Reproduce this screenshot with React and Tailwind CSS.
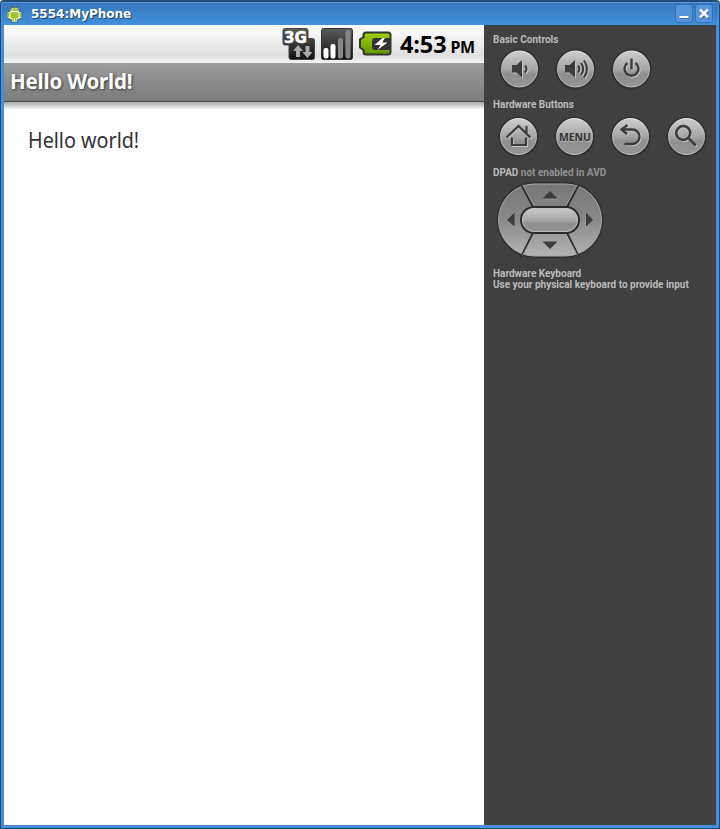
import React from "react";

function AndroidIcon() {
  return (
    <svg width="16" height="18" viewBox="0 0 16 18" className="shrink-0">
      <path d="M3.500 .5l2 3M11.500 .5l-2 3" stroke="#4d5f30" strokeWidth="1" />
      <path d="M3 6.500V5l2-2.500h5L12 5v1.500l2.800.5v6l-2.300.5-.5 1h-1.500V17h-6v-2.500H3l-.5-1L.2 13V7z" fill="#fff" stroke="#45572e" strokeWidth=".7" />
      <g fill="#9dc526">
        <rect x="1" y="7.500" width="1.500" height="4.500" />
        <rect x="12.500" y="7.500" width="1.500" height="4.500" />
        <path d="M3.800 6a3.700 3 0 0 1 7.400 0zM3.500 7.200h8v6h-2V16H8v-2.800H7V16H5.500v-2.800h-2z" />
      </g>
      <path d="M5.500 4.300h1v1h-1zM8.500 4.300h1v1h-1z" fill="#fff" />
    </svg>
  );
}

function WindowButton({ children }) {
  return (
    <div className="flex h-[19px] w-[18px] items-center justify-center rounded-[3px] border border-[#3370b5] bg-[#5795da]">
      <svg width="16" height="17" viewBox="0 0 16 17" fill="none">{children}</svg>
    </div>
  );
}

function NetworkIcon() {
  return (
    <svg width="34" height="34" viewBox="0 0 34 34">
      <defs>
        <linearGradient id="dark" x1="0" y1="0" x2="0" y2="1">
          <stop offset="0" stopColor="#5c5c5c" /><stop offset="1" stopColor="#111" />
        </linearGradient>
      </defs>
      <path d="M3 1.500h21q2 0 2 2v8h4.500q2 0 2 2v17q0 2-2 2H9q-2 0-2-2V18H3q-2 0-2-2V3.500q0-2 2-2z" fill="url(#dark)" stroke="#444" />
      <text x="2" y="16" fill="#fff" stroke="#fff" strokeWidth=".5" fontFamily="DejaVu Sans, sans-serif" fontSize="16.5" fontWeight="700" textLength="23" lengthAdjust="spacingAndGlyphs">3G</text>
      <path d="M16 18l5 6h-3v6h-4v-6h-3zM25.500 31l5-6h-3v-6h-4v6h-3z" fill="#aaa" />
    </svg>
  );
}

function SignalIcon() {
  return (
    <svg width="34" height="34" viewBox="0 0 34 34">
      <rect x="1.500" y="1.500" width="31" height="31" rx="2" fill="url(#dark)" stroke="#333" />
      <rect x="3.500" y="21" width="5" height="10.500" rx="2" fill="#fff" />
      <rect x="10.500" y="17" width="5" height="14.500" rx="2" fill="#fff" />
      <rect x="18" y="11" width="5" height="20.500" rx="2" fill="#888" />
      <rect x="25.500" y="3" width="5" height="28.500" rx="2" fill="#858585" />
    </svg>
  );
}

function BatteryIcon() {
  return (
    <svg width="34" height="26" viewBox="0 0 34 26">
      <defs>
        <linearGradient id="green" x1="0" y1="0" x2="0" y2="1">
          <stop offset="0" stopColor="#a0d000" /><stop offset="1" stopColor="#609500" />
        </linearGradient>
      </defs>
      <path d="M8 1.500h22q2.500 0 2.500 2.500v17q0 2.500-2.500 2.500H8q-2.500 0-2.500-2.500v-2L2 16.500v-8L5.500 6V4q0-2.500 2.500-2.500z" fill="url(#green)" stroke="#333" strokeWidth="2" />
      <path d="M32 7H17q-3 0-3 3v6q0 3 3 3h15z" fill="#333" />
      <path d="M24.500 7L16.500 14h6l-3 5 10-7.500H24l3-4.500z" fill="#fff" />
    </svg>
  );
}

function Etched({ d, width = 2.500, fill = false }) {
  return (
    <>
      <path d={d} transform="translate(1 1)" fill={fill ? "#c4c4c4" : "none"} stroke="#c4c4c4" strokeWidth={fill ? 0 : width} />
      <path d={d} fill={fill ? "#3c3c3c" : "none"} stroke="#3c3c3c" strokeWidth={fill ? 0 : width} />
    </>
  );
}

function RoundButton({ label, children, low = false }) {
  return (
    <svg width="40" height="40" viewBox={low ? "0 -0.5 40 40" : "0 0 40 40"} className="overflow-visible" role="img" aria-label={label}>
      <defs>
        <linearGradient id="knob" x1="0" y1="0" x2="0" y2="1">
          <stop offset="0" stopColor="#cecece" /><stop offset=".5" stopColor="#a6a6a6" />
          <stop offset=".65" stopColor="#8e8e8e" /><stop offset="1" stopColor="#969696" />
        </linearGradient>
        <linearGradient id="rim" x1="0" y1="0" x2="0" y2="1">
          <stop offset="0" stopColor="#e4e4e4" /><stop offset=".5" stopColor="#b4b4b4" /><stop offset="1" stopColor="#c0c0c0" />
        </linearGradient>
      </defs>
      <circle cx="20.500" cy="20.200" r="20.500" fill="#393939" />
      <circle cx="20.500" cy="20.200" r="19.600" fill="#2e2e2e" />
      <circle cx="20.500" cy="20" r="18" fill="url(#knob)" stroke="url(#rim)" />
      {children}
    </svg>
  );
}

function PanelLabel({ children, className = "" }) {
  return <div className={"h-[11px] whitespace-nowrap text-[10px] leading-[11px] font-bold text-[#bcbcbc] " + className}>{children}</div>;
}

function DPad() {
  return (
    <svg width="108" height="78" viewBox="0 0 108 78" className="mt-[3px] ml-[3px] block">
      <defs>
        <linearGradient id="pad" x1="0" y1="0" x2="0" y2="1">
          <stop offset="0" stopColor="#777" /><stop offset=".5" stopColor="#898989" /><stop offset="1" stopColor="#b5b5b5" />
        </linearGradient>
      </defs>
      <rect x=".5" y="1" width="107" height="76" rx="38" fill="#2f2f2f" />
      <rect x="2.500" y="3" width="103" height="72" rx="36" fill="url(#pad)" stroke="#a8a8a8" />
      <path d="M25 3l12.500 24M83 3L70.500 27M25 76l12.500-25M83 76L70.500 51" stroke="#2c2c2c" strokeWidth="2" />
      <path d="M26.500 3.500l12.500 23M81.500 3.500l-12.500 23M26.500 74.500l12.500-23M81.500 74.500l-12.500-23" stroke="#aaa" strokeWidth=".7" />
      <rect x="25" y="26" width="58" height="26" rx="13" fill="url(#knob)" stroke="#2b2b2b" strokeWidth="2" />
      <rect x="26.500" y="27.500" width="55" height="23" rx="11.500" fill="none" stroke="#c0c0c0" strokeWidth=".8" />
      <path d="M47 18h15M47 61h15M90 46V33" stroke="#b2b2b2" strokeWidth=".7" />
      <path d="M46.500 17.500L54 10l7.500 7.500zM46.500 60.500L54 68l7.500-7.500zM18.500 31.500v14L11 39zM90 31.500v14l7-6.500z" fill="#3c3c3c" />
    </svg>
  );
}

export default function App() {
  return (
    <div className="flex h-[829px] w-[720px] flex-col overflow-hidden rounded-t-[4px] border border-t-[2px] border-[#204a75] bg-[#4590db] px-[3px] pb-[3px] font-['Roboto',sans-serif]">
      <header className="-mx-[2px] flex h-[23px] shrink-0 items-center bg-linear-to-b from-[#3775bb] to-[#428fdb] pl-[5px] pr-[4px] shadow-[inset_0_1px_#5599df]">
        <AndroidIcon />
        <h1 className="ml-[8px] flex-1 font-['DejaVu_Sans',sans-serif] text-[12px] leading-[18px] font-bold text-white [text-shadow:1px_1px_1px_#183f6b]">5554:MyPhone</h1>
        <div className="mr-[1px] flex gap-[2px]">
          <WindowButton><path d="M4 12.500h9" stroke="#24578d" strokeWidth="2" /><path d="M3.500 12h9" stroke="#fff" strokeWidth="2" /></WindowButton>
          <WindowButton><path d="M4.500 5.500l8 8m0-8l-8 8" stroke="#24578d" strokeWidth="2.500" /><path d="M4 4.500l8 8m0-8l-8 8" stroke="#fff" strokeWidth="2.500" /></WindowButton>
        </div>
      </header>
      <div className="flex min-h-0 flex-1">
        <main className="flex w-[480px] shrink-0 flex-col bg-white font-['Noto_Sans',sans-serif]">
          <div className="flex h-[38px] shrink-0 items-center justify-end bg-linear-to-b from-white via-[#e0e0e0] via-80% to-[#f4f4f4] pr-[9px] text-black">
            <div className="mr-[7px] flex items-center gap-[4px]"><NetworkIcon /><SignalIcon /><BatteryIcon /></div>
            <div className="flex w-[76px] items-baseline justify-between whitespace-nowrap font-bold">
              <span className="ml-[1px] text-[23.500px] leading-[30px] tracking-[-0.1px]">4:53</span>
              <span className="text-[16px] tracking-[-0.2px]">PM</span>
            </div>
          </div>
          <div className="h-[39px] shrink-0 border-b border-[#4b4b4b] bg-linear-to-b from-[#9d9b9d] to-[#7d7c7d] pl-[6px] text-[20.5px] leading-[37px] font-bold tracking-[-0.18px] text-white [text-shadow:1px_1px_3px_#343b34]">Hello World!</div>
          <div className="h-[8px] shrink-0 bg-linear-to-b from-[#aaa] to-white" />
          <p className="mt-[14px] ml-[24px] origin-left scale-x-[0.94] text-[21px] leading-[32px] text-[#333]">Hello world!</p>
        </main>
        <aside className="flex-1 bg-[#404040] pt-[9px] pl-[9px]">
          <PanelLabel>Basic Controls</PanelLabel>
          <div className="mt-[4px] ml-[6px] flex gap-[16px]">
            <RoundButton label="Volume down">
              <Etched fill d="M13 16h4.500l5.500-5v17.500l-5.500-5H13z" />
              <Etched d="M26 16.500q3 3.500 0 7" width={2} />
            </RoundButton>
            <RoundButton label="Volume up">
              <Etched fill d="M10 16h4.500l5.500-5v17.500l-5.500-5H10z" />
              <Etched d="M23 16.500q2.500 3.500 0 7M26 14q4.500 6 0 12M29 11.500q6 8.500 0 17" width={2} />
            </RoundButton>
            <RoundButton label="Power">
              <Etched d="M16.500 14a7 7 0 1 0 8 0M20.500 9.500v11" width={2.400} />
            </RoundButton>
          </div>
          <PanelLabel className="mt-[10px]">Hardware Buttons</PanelLabel>
          <div className="mt-[6px] ml-[5px] flex gap-[16px]">
            <RoundButton label="Home" low>
              <Etched d="M8.500 21L20.500 9.500L32.500 21M28.500 16.500V9.500M14 21v7.500h14V21" width={2.200} />
            </RoundButton>
            <RoundButton label="Menu" low>
              <text x="21.500" y="25" textAnchor="middle" fill="#bbb" fontFamily="Open Sans, sans-serif" fontSize="10.5" fontWeight="700" textLength="32" aria-hidden="true">MENU</text>
              <text x="21" y="24.300" textAnchor="middle" fill="#333" fontFamily="Open Sans, sans-serif" fontSize="10.5" fontWeight="700" textLength="32">MENU</text>
            </RoundButton>
            <RoundButton label="Back" low>
              <Etched d="M17.500 8.500L11.500 13l5.500 4.500M12 13H22.500a7 7.250 0 0 1 0 14.500H14.500" width={2.300} />
            </RoundButton>
            <RoundButton label="Search" low>
              <Etched d="M24.300 16.500a7 7 0 1 1-14 0a7 7 0 1 1 14 0M22.300 21.500l7.500 7.500" width={2.600} />
            </RoundButton>
          </div>
          <PanelLabel className="mt-[11px]">DPAD <span className="text-[#929292]">not enabled in AVD</span></PanelLabel>
          <DPad />
          <PanelLabel className="mt-[9px]">Hardware Keyboard</PanelLabel>
          <PanelLabel>Use your physical keyboard to provide input</PanelLabel>
        </aside>
      </div>
    </div>
  );
}
